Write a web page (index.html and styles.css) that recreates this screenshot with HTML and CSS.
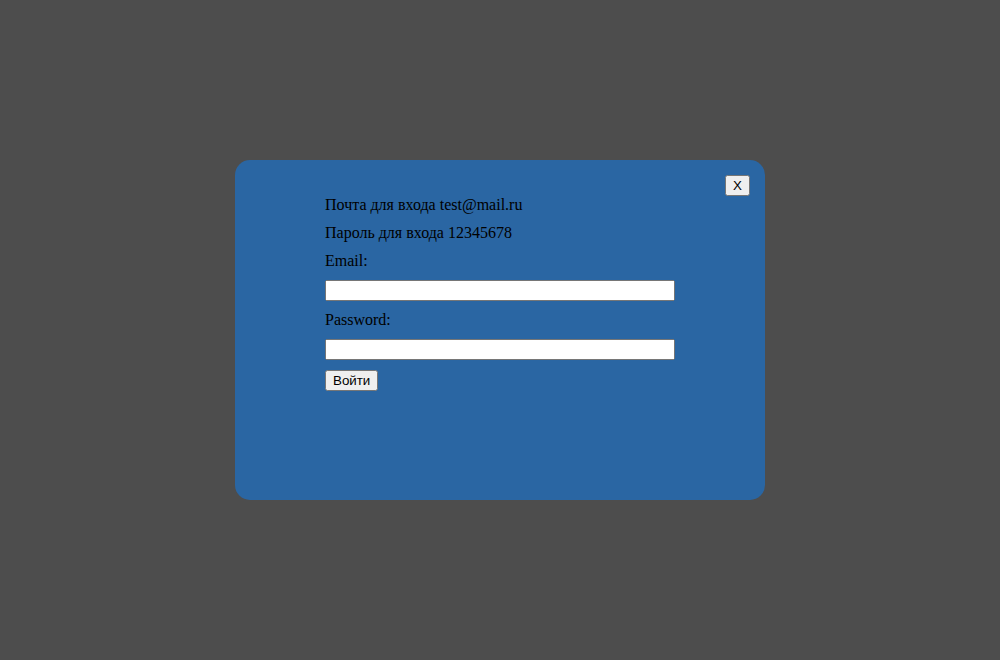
FILE: index.html
```html
<!DOCTYPE html>
<html lang="ru">
<head>
<meta charset="utf-8">
<title>Вход</title>
<link rel="stylesheet" href="styles.css">
</head>
<body>
<div class="overlay">
  <div class="modal">
    <button class="close" type="button">X</button>
    <form class="form">
      <p class="line">Почта для входа test@mail.ru</p>
      <p class="line">Пароль для входа 12345678</p>
      <label class="line" for="email">Email:</label>
      <input class="field" id="email" type="email">
      <label class="line" for="password">Password:</label>
      <input class="field" id="password" type="password">
      <div class="actions"><button class="submit" type="submit">Войти</button></div>
    </form>
  </div>
</div>
</body>
</html>
```
FILE: styles.css
```css
html, body {
  margin: 0;
  padding: 0;
}
body {
  background: #4d4d4d;
  font-family: "Liberation Serif", "Times New Roman", serif;
  font-size: 16px;
  color: #000;
}
.overlay {
  height: 100vh;
  display: flex;
  align-items: center;
  justify-content: center;
}
.modal {
  position: relative;
  box-sizing: border-box;
  width: 530px;
  height: 340px;
  background: #2a66a3;
  border-radius: 15px;
  padding: 36px 90px;
}
.close {
  position: absolute;
  top: 15px;
  right: 15px;
  font-family: "Liberation Sans", Arial, sans-serif;
  font-size: 13.333px;
}
.form {
  display: flex;
  flex-direction: column;
  align-items: flex-start;
  gap: 10px;
}
.line {
  margin: 0;
  line-height: 18px;
  display: block;
}
.field {
  box-sizing: border-box;
  width: 350px;
  height: 21px;
  margin: 0;
}
.actions {
  display: flex;
}
.submit {
  font-family: "Liberation Sans", Arial, sans-serif;
  font-size: 13.333px;
  margin: 0;
}
```
